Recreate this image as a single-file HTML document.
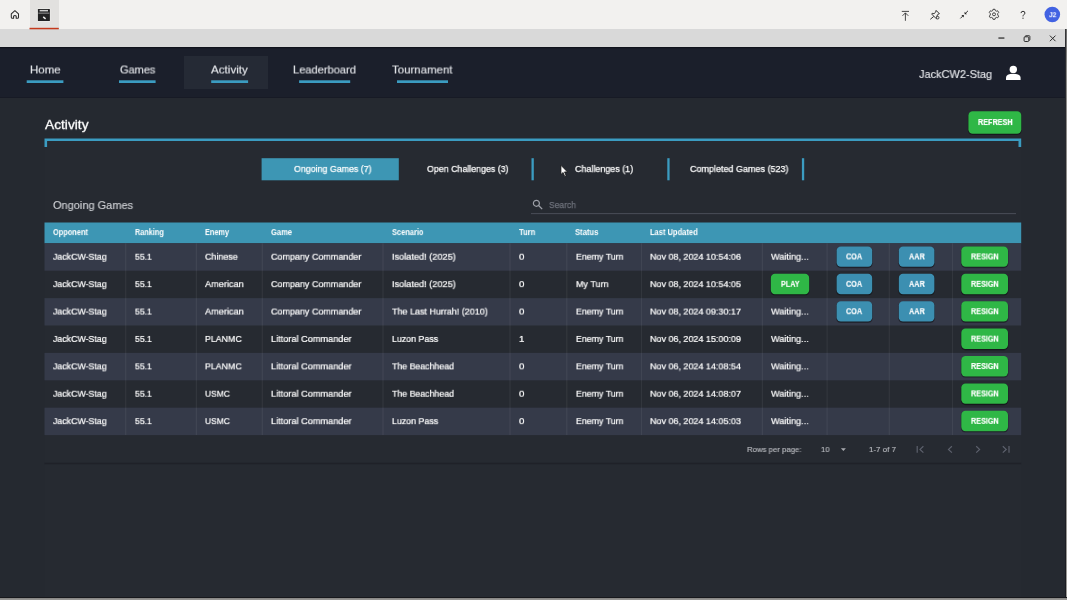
<!DOCTYPE html>
<html>
<head>
<meta charset="utf-8">
<title>Activity</title>
<style>
*{box-sizing:border-box;margin:0;padding:0}
html,body{width:1067px;height:600px;overflow:hidden;background:#9c9b98;font-family:"Liberation Sans",sans-serif;}
#topbar{position:absolute;left:0;top:0;width:1067px;height:29px;background:#f2f1ef}
#tabsel{position:absolute;left:29.5px;top:0;width:29.3px;height:29px;background:#e2e1df}
#titlebar{position:absolute;left:0;top:29px;width:1065px;height:18px;background:#d9d9d9}
#re1{position:absolute;left:1064.8px;top:29px;width:1.2px;height:571px;background:linear-gradient(#3a3a3a 0,#2a2b30 20px,#1b1c22 100%)}
#re2{position:absolute;left:1066px;top:29px;width:1px;height:571px;background:linear-gradient(#6a6a6a 0,#8d8c8a 40px,#9c9b98 100%)}
#nav{position:absolute;left:0;top:47px;width:1065px;height:51px;background:#1b1f2b}
#content{position:absolute;left:0;top:98px;width:1065px;height:499.5px;background:#252930}
#card{position:absolute;left:44.5px;top:141px;width:976.5px;height:456.5px;background:#262a31}
#bottomedge{position:absolute;left:0;top:597px;width:1067px;height:3px;background:linear-gradient(#17181c 0,#17181c 0.8px,#8a8987 1.4px,#9c9b98 3px)}
.t{position:absolute;white-space:nowrap;transform-origin:0 50%;will-change:transform}
.navitem{height:16px;line-height:16px;font-size:11.5px;color:#e2e4e8;-webkit-text-stroke:0.15px #e2e4e8}
#navact{position:absolute;left:184.3px;top:56px;width:83.3px;height:33px;background:#252a35}
#user{font-size:11.8px;height:16px;line-height:16px;color:#e2e4e8;-webkit-text-stroke:0.15px #e2e4e8}
.bt{color:#fff;font-weight:bold;font-size:8.8px;height:10px;line-height:10px;-webkit-text-stroke:0.15px #fff}
#h1{font-size:13.5px;height:18px;line-height:18px;color:#fff;-webkit-text-stroke:0.3px #fff}
.tab{height:22px;line-height:22px;font-size:9.6px;color:#fff;-webkit-text-stroke:0.25px #fff}
#sect{font-size:11.4px;height:16px;line-height:16px;color:#d2d4d8;-webkit-text-stroke:0.12px #d2d4d8}
#search{font-size:9.7px;height:14px;line-height:14px;color:#6d717b;-webkit-text-stroke:0.25px #6d717b}
.th{height:20.8px;line-height:20px;font-size:8.4px;font-weight:bold;color:#fff}
.td{height:14px;line-height:14px;font-size:9.7px;color:#fff;-webkit-text-stroke:0.22px #fff}
.pg{height:13px;line-height:13px;font-size:8px;color:#b8babf;-webkit-text-stroke:0.15px #b8babf}
svg{position:absolute;overflow:visible}
</style>
</head>
<body>
<div id="topbar"></div>
<div id="tabsel"></div>
<div id="titlebar"></div>
<div id="re1"></div><div id="re2"></div>
<div id="nav"></div>
<div id="content"></div>
<div id="card"></div>
<div id="bottomedge"></div>
<svg id="ul" style="left:0;top:0" width="1067" height="600" viewBox="0 0 1067 600">
<rect x="261.6" y="158.2" width="137.2" height="22.1" fill="#3d96b4"/>
<rect x="44.5" y="222.5" width="976.7" height="20.8" fill="#3d96b4"/>
<rect x="44.5" y="243.30" width="976.7" height="27.40" fill="#353a49"/>
<rect x="44.5" y="298.10" width="976.7" height="27.40" fill="#353a49"/>
<rect x="44.5" y="352.90" width="976.7" height="27.40" fill="#353a49"/>
<rect x="44.5" y="407.70" width="976.7" height="27.40" fill="#353a49"/>
<rect x="125.1" y="243.3" width="1.2" height="191.8" fill="#fff" fill-opacity="0.06"/>
<rect x="195.8" y="243.3" width="1.2" height="191.8" fill="#fff" fill-opacity="0.06"/>
<rect x="261.7" y="243.3" width="1.2" height="191.8" fill="#fff" fill-opacity="0.06"/>
<rect x="382.4" y="243.3" width="1.2" height="191.8" fill="#fff" fill-opacity="0.06"/>
<rect x="509.4" y="243.3" width="1.2" height="191.8" fill="#fff" fill-opacity="0.06"/>
<rect x="566.2" y="243.3" width="1.2" height="191.8" fill="#fff" fill-opacity="0.06"/>
<rect x="640.9" y="243.3" width="1.2" height="191.8" fill="#fff" fill-opacity="0.06"/>
<rect x="761.8" y="243.3" width="1.2" height="191.8" fill="#fff" fill-opacity="0.06"/>
<rect x="826.5" y="243.3" width="1.2" height="191.8" fill="#fff" fill-opacity="0.06"/>
<rect x="888.7" y="243.3" width="1.2" height="191.8" fill="#fff" fill-opacity="0.06"/>
<rect x="951.9" y="243.3" width="1.2" height="191.8" fill="#fff" fill-opacity="0.06"/>
<rect x="967.9" y="111.50" width="53.9" height="23.6" rx="4.6" fill="#000" fill-opacity="0.28"/>
<rect x="968.4" y="111.90" width="52.9" height="22.4" rx="4.2" fill="#000" fill-opacity="0.35"/>
<rect x="968.4" y="111.30" width="52.9" height="22.4" rx="4.2" fill="#2fb746"/>
<rect x="836.1" y="246.60" width="36.6" height="21.6" rx="4.6" fill="#000" fill-opacity="0.28"/>
<rect x="836.6" y="247.00" width="35.6" height="20.4" rx="4.2" fill="#000" fill-opacity="0.35"/>
<rect x="836.6" y="246.40" width="35.6" height="20.4" rx="4.2" fill="#3c8fb1"/>
<rect x="898.3" y="246.60" width="36.6" height="21.6" rx="4.6" fill="#000" fill-opacity="0.28"/>
<rect x="898.8" y="247.00" width="35.6" height="20.4" rx="4.2" fill="#000" fill-opacity="0.35"/>
<rect x="898.8" y="246.40" width="35.6" height="20.4" rx="4.2" fill="#3c8fb1"/>
<rect x="960.8" y="246.60" width="47.7" height="21.6" rx="4.6" fill="#000" fill-opacity="0.28"/>
<rect x="961.3" y="247.00" width="46.7" height="20.4" rx="4.2" fill="#000" fill-opacity="0.35"/>
<rect x="961.3" y="246.40" width="46.7" height="20.4" rx="4.2" fill="#2fb746"/>
<rect x="770.3" y="274.00" width="39.4" height="21.6" rx="4.6" fill="#000" fill-opacity="0.28"/>
<rect x="770.8" y="274.40" width="38.4" height="20.4" rx="4.2" fill="#000" fill-opacity="0.35"/>
<rect x="770.8" y="273.80" width="38.4" height="20.4" rx="4.2" fill="#2fb746"/>
<rect x="836.1" y="274.00" width="36.6" height="21.6" rx="4.6" fill="#000" fill-opacity="0.28"/>
<rect x="836.6" y="274.40" width="35.6" height="20.4" rx="4.2" fill="#000" fill-opacity="0.35"/>
<rect x="836.6" y="273.80" width="35.6" height="20.4" rx="4.2" fill="#3c8fb1"/>
<rect x="898.3" y="274.00" width="36.6" height="21.6" rx="4.6" fill="#000" fill-opacity="0.28"/>
<rect x="898.8" y="274.40" width="35.6" height="20.4" rx="4.2" fill="#000" fill-opacity="0.35"/>
<rect x="898.8" y="273.80" width="35.6" height="20.4" rx="4.2" fill="#3c8fb1"/>
<rect x="960.8" y="274.00" width="47.7" height="21.6" rx="4.6" fill="#000" fill-opacity="0.28"/>
<rect x="961.3" y="274.40" width="46.7" height="20.4" rx="4.2" fill="#000" fill-opacity="0.35"/>
<rect x="961.3" y="273.80" width="46.7" height="20.4" rx="4.2" fill="#2fb746"/>
<rect x="836.1" y="301.40" width="36.6" height="21.6" rx="4.6" fill="#000" fill-opacity="0.28"/>
<rect x="836.6" y="301.80" width="35.6" height="20.4" rx="4.2" fill="#000" fill-opacity="0.35"/>
<rect x="836.6" y="301.20" width="35.6" height="20.4" rx="4.2" fill="#3c8fb1"/>
<rect x="898.3" y="301.40" width="36.6" height="21.6" rx="4.6" fill="#000" fill-opacity="0.28"/>
<rect x="898.8" y="301.80" width="35.6" height="20.4" rx="4.2" fill="#000" fill-opacity="0.35"/>
<rect x="898.8" y="301.20" width="35.6" height="20.4" rx="4.2" fill="#3c8fb1"/>
<rect x="960.8" y="301.40" width="47.7" height="21.6" rx="4.6" fill="#000" fill-opacity="0.28"/>
<rect x="961.3" y="301.80" width="46.7" height="20.4" rx="4.2" fill="#000" fill-opacity="0.35"/>
<rect x="961.3" y="301.20" width="46.7" height="20.4" rx="4.2" fill="#2fb746"/>
<rect x="960.8" y="328.80" width="47.7" height="21.6" rx="4.6" fill="#000" fill-opacity="0.28"/>
<rect x="961.3" y="329.20" width="46.7" height="20.4" rx="4.2" fill="#000" fill-opacity="0.35"/>
<rect x="961.3" y="328.60" width="46.7" height="20.4" rx="4.2" fill="#2fb746"/>
<rect x="960.8" y="356.20" width="47.7" height="21.6" rx="4.6" fill="#000" fill-opacity="0.28"/>
<rect x="961.3" y="356.60" width="46.7" height="20.4" rx="4.2" fill="#000" fill-opacity="0.35"/>
<rect x="961.3" y="356.00" width="46.7" height="20.4" rx="4.2" fill="#2fb746"/>
<rect x="960.8" y="383.60" width="47.7" height="21.6" rx="4.6" fill="#000" fill-opacity="0.28"/>
<rect x="961.3" y="384.00" width="46.7" height="20.4" rx="4.2" fill="#000" fill-opacity="0.35"/>
<rect x="961.3" y="383.40" width="46.7" height="20.4" rx="4.2" fill="#2fb746"/>
<rect x="960.8" y="411.00" width="47.7" height="21.6" rx="4.6" fill="#000" fill-opacity="0.28"/>
<rect x="961.3" y="411.40" width="46.7" height="20.4" rx="4.2" fill="#000" fill-opacity="0.35"/>
<rect x="961.3" y="410.80" width="46.7" height="20.4" rx="4.2" fill="#2fb746"/>
</svg>

<!-- top bar icons -->
<!-- upload -->
<!-- pin -->
<!-- collapse -->
<!-- gear -->
<!-- help -->
<!-- avatar -->
<!-- window controls -->

<!-- nav -->
<div id="navact"></div>
<div class="t navitem" style="top:61px;transform:translateY(0.50px) rotate(0.05deg) scaleX(0.9971);left:29.8px">Home</div>
<div class="t navitem" style="top:61px;transform:translateY(0.50px) rotate(0.05deg) scaleX(0.9547);left:119.6px">Games</div>
<div class="t navitem" style="top:61px;transform:translateY(0.50px) rotate(0.05deg) scaleX(1.0131);left:211.2px">Activity</div>
<div class="t navitem" style="top:61px;transform:translateY(0.50px) rotate(0.05deg) scaleX(0.9657);left:293px">Leaderboard</div>
<div class="t navitem" style="top:61px;transform:translateY(0.50px) rotate(0.05deg) scaleX(0.9945);left:391.7px">Tournament</div>
<div class="t" id="user" style="top:66px;transform:translateY(0.00px) rotate(0.05deg) scaleX(0.9304);left:918.8px">JackCW2-Stag</div>

<!-- content head -->
<div class="t" id="h1" style="top:116px;transform:translateY(0.10px) rotate(0.05deg) scaleX(1.0172);left:44.5px">Activity</div>

<!-- tabs -->
<div class="t tab" style="top:157px;transform:translateY(0.90px) rotate(0.05deg) scaleX(0.9211);left:294.4px">Ongoing Games (7)</div>
<div class="t tab" style="top:157px;transform:translateY(0.90px) rotate(0.05deg) scaleX(0.9217);left:427.4px">Open Challenges (3)</div>
<div class="t tab" style="top:157px;transform:translateY(0.90px) rotate(0.05deg) scaleX(0.9326);left:574.8px">Challenges (1)</div>
<div class="t tab" style="top:157px;transform:translateY(0.90px) rotate(0.05deg) scaleX(0.9377);left:689.5px">Completed Games (523)</div>

<div class="t" id="sect" style="top:197px;transform:translateY(0.00px) rotate(0.05deg) scaleX(0.9656);left:53.2px">Ongoing Games</div>
<div class="t" id="search" style="top:198px;transform:translateY(0.00px) rotate(0.05deg) scaleX(0.8794);left:548.7px">Search</div>

<!-- table -->
<div class="t th" style="top:222px;transform:translateY(0.10px) rotate(0.05deg) scaleX(0.8825);left:53.0px">Opponent</div>
<div class="t th" style="top:222px;transform:translateY(0.10px) rotate(0.05deg) scaleX(0.8715);left:135.0px">Ranking</div>
<div class="t th" style="top:222px;transform:translateY(0.10px) rotate(0.05deg) scaleX(0.8774);left:204.9px">Enemy</div>
<div class="t th" style="top:222px;transform:translateY(0.10px) rotate(0.05deg) scaleX(0.9063);left:270.5px">Game</div>
<div class="t th" style="top:222px;transform:translateY(0.10px) rotate(0.05deg) scaleX(0.8901);left:391.7px">Scenario</div>
<div class="t th" style="top:222px;transform:translateY(0.10px) rotate(0.05deg) scaleX(0.9119);left:518.5px">Turn</div>
<div class="t th" style="top:222px;transform:translateY(0.10px) rotate(0.05deg) scaleX(0.9137);left:575.2px">Status</div>
<div class="t th" style="top:222px;transform:translateY(0.10px) rotate(0.05deg) scaleX(0.8989);left:650.1px">Last Updated</div>
<div class="t bt" style="top:117px;transform:translateY(0.05px) rotate(0.05deg) scaleX(0.7880);left:977.8px;font-size:9.2px">REFRESH</div>
<div class="t td" style="top:249px;transform:translateY(0.75px) rotate(0.05deg) scaleX(0.9078);left:53.1px;">JackCW-Stag</div>
<div class="t td" style="top:249px;transform:translateY(0.75px) rotate(0.05deg) scaleX(0.8908);left:135.1px;">55.1</div>
<div class="t td" style="top:249px;transform:translateY(0.75px) rotate(0.05deg) scaleX(0.9199);left:205.2px;">Chinese</div>
<div class="t td" style="top:249px;transform:translateY(0.75px) rotate(0.05deg) scaleX(0.9266);left:270.8px;">Company Commander</div>
<div class="t td" style="top:249px;transform:translateY(0.75px) rotate(0.05deg) scaleX(0.9476);left:392.0px;">Isolated! (2025)</div>
<div class="t td" style="top:249px;transform:translateY(0.75px) rotate(0.05deg) scaleX(1.0017);left:518.7px;">0</div>
<div class="t td" style="top:249px;transform:translateY(0.75px) rotate(0.05deg) scaleX(0.9094);left:575.5px;">Enemy Turn</div>
<div class="t td" style="top:249px;transform:translateY(0.75px) rotate(0.05deg) scaleX(0.9273);left:650.4px;">Nov 08, 2024 10:54:06</div>
<div class="t td" style="top:249px;transform:translateY(0.75px) rotate(0.05deg) scaleX(0.9443);left:771.4px;">Waiting...</div>
<div class="t bt" style="top:251px;transform:translateY(0.45px) rotate(0.05deg) scaleX(0.8230);left:846.2px;">COA</div>
<div class="t bt" style="top:251px;transform:translateY(0.45px) rotate(0.05deg) scaleX(0.8289);left:908.7px;">AAR</div>
<div class="t bt" style="top:251px;transform:translateY(0.45px) rotate(0.05deg) scaleX(0.8241);left:970.5px;">RESIGN</div>
<div class="t td" style="top:277px;transform:translateY(0.15px) rotate(0.05deg) scaleX(0.9078);left:53.1px;">JackCW-Stag</div>
<div class="t td" style="top:277px;transform:translateY(0.15px) rotate(0.05deg) scaleX(0.8908);left:135.1px;">55.1</div>
<div class="t td" style="top:277px;transform:translateY(0.15px) rotate(0.05deg) scaleX(0.9457);left:205.2px;">American</div>
<div class="t td" style="top:277px;transform:translateY(0.15px) rotate(0.05deg) scaleX(0.9266);left:270.8px;">Company Commander</div>
<div class="t td" style="top:277px;transform:translateY(0.15px) rotate(0.05deg) scaleX(0.9476);left:392.0px;">Isolated! (2025)</div>
<div class="t td" style="top:277px;transform:translateY(0.15px) rotate(0.05deg) scaleX(1.0017);left:518.7px;">0</div>
<div class="t td" style="top:277px;transform:translateY(0.15px) rotate(0.05deg) scaleX(0.9314);left:575.5px;">My Turn</div>
<div class="t td" style="top:277px;transform:translateY(0.15px) rotate(0.05deg) scaleX(0.9273);left:650.4px;">Nov 08, 2024 10:54:05</div>
<div class="t bt" style="top:278px;transform:translateY(0.85px) rotate(0.05deg) scaleX(0.8210);left:781.1px;">PLAY</div>
<div class="t bt" style="top:278px;transform:translateY(0.85px) rotate(0.05deg) scaleX(0.8230);left:846.2px;">COA</div>
<div class="t bt" style="top:278px;transform:translateY(0.85px) rotate(0.05deg) scaleX(0.8289);left:908.7px;">AAR</div>
<div class="t bt" style="top:278px;transform:translateY(0.85px) rotate(0.05deg) scaleX(0.8241);left:970.5px;">RESIGN</div>
<div class="t td" style="top:304px;transform:translateY(0.55px) rotate(0.05deg) scaleX(0.9078);left:53.1px;">JackCW-Stag</div>
<div class="t td" style="top:304px;transform:translateY(0.55px) rotate(0.05deg) scaleX(0.8908);left:135.1px;">55.1</div>
<div class="t td" style="top:304px;transform:translateY(0.55px) rotate(0.05deg) scaleX(0.9457);left:205.2px;">American</div>
<div class="t td" style="top:304px;transform:translateY(0.55px) rotate(0.05deg) scaleX(0.9266);left:270.8px;">Company Commander</div>
<div class="t td" style="top:304px;transform:translateY(0.55px) rotate(0.05deg) scaleX(0.9256);left:392.0px;">The Last Hurrah! (2010)</div>
<div class="t td" style="top:304px;transform:translateY(0.55px) rotate(0.05deg) scaleX(1.0017);left:518.7px;">0</div>
<div class="t td" style="top:304px;transform:translateY(0.55px) rotate(0.05deg) scaleX(0.9094);left:575.5px;">Enemy Turn</div>
<div class="t td" style="top:304px;transform:translateY(0.55px) rotate(0.05deg) scaleX(0.9273);left:650.4px;">Nov 08, 2024 09:30:17</div>
<div class="t td" style="top:304px;transform:translateY(0.55px) rotate(0.05deg) scaleX(0.9443);left:771.4px;">Waiting...</div>
<div class="t bt" style="top:306px;transform:translateY(0.25px) rotate(0.05deg) scaleX(0.8230);left:846.2px;">COA</div>
<div class="t bt" style="top:306px;transform:translateY(0.25px) rotate(0.05deg) scaleX(0.8289);left:908.7px;">AAR</div>
<div class="t bt" style="top:306px;transform:translateY(0.25px) rotate(0.05deg) scaleX(0.8241);left:970.5px;">RESIGN</div>
<div class="t td" style="top:331px;transform:translateY(0.95px) rotate(0.05deg) scaleX(0.9078);left:53.1px;">JackCW-Stag</div>
<div class="t td" style="top:331px;transform:translateY(0.95px) rotate(0.05deg) scaleX(0.8908);left:135.1px;">55.1</div>
<div class="t td" style="top:331px;transform:translateY(0.95px) rotate(0.05deg) scaleX(0.9090);left:205.2px;">PLANMC</div>
<div class="t td" style="top:331px;transform:translateY(0.95px) rotate(0.05deg) scaleX(0.9474);left:270.8px;">Littoral Commander</div>
<div class="t td" style="top:331px;transform:translateY(0.95px) rotate(0.05deg) scaleX(0.9126);left:392.0px;">Luzon Pass</div>
<div class="t td" style="top:331px;transform:translateY(0.95px) rotate(0.05deg) scaleX(1.0017);left:518.7px;">1</div>
<div class="t td" style="top:331px;transform:translateY(0.95px) rotate(0.05deg) scaleX(0.9094);left:575.5px;">Enemy Turn</div>
<div class="t td" style="top:331px;transform:translateY(0.95px) rotate(0.05deg) scaleX(0.9273);left:650.4px;">Nov 06, 2024 15:00:09</div>
<div class="t td" style="top:331px;transform:translateY(0.95px) rotate(0.05deg) scaleX(0.9443);left:771.4px;">Waiting...</div>
<div class="t bt" style="top:333px;transform:translateY(0.65px) rotate(0.05deg) scaleX(0.8241);left:970.5px;">RESIGN</div>
<div class="t td" style="top:359px;transform:translateY(0.35px) rotate(0.05deg) scaleX(0.9078);left:53.1px;">JackCW-Stag</div>
<div class="t td" style="top:359px;transform:translateY(0.35px) rotate(0.05deg) scaleX(0.8908);left:135.1px;">55.1</div>
<div class="t td" style="top:359px;transform:translateY(0.35px) rotate(0.05deg) scaleX(0.9090);left:205.2px;">PLANMC</div>
<div class="t td" style="top:359px;transform:translateY(0.35px) rotate(0.05deg) scaleX(0.9474);left:270.8px;">Littoral Commander</div>
<div class="t td" style="top:359px;transform:translateY(0.35px) rotate(0.05deg) scaleX(0.9063);left:392.0px;">The Beachhead</div>
<div class="t td" style="top:359px;transform:translateY(0.35px) rotate(0.05deg) scaleX(1.0017);left:518.7px;">0</div>
<div class="t td" style="top:359px;transform:translateY(0.35px) rotate(0.05deg) scaleX(0.9094);left:575.5px;">Enemy Turn</div>
<div class="t td" style="top:359px;transform:translateY(0.35px) rotate(0.05deg) scaleX(0.9273);left:650.4px;">Nov 06, 2024 14:08:54</div>
<div class="t td" style="top:359px;transform:translateY(0.35px) rotate(0.05deg) scaleX(0.9443);left:771.4px;">Waiting...</div>
<div class="t bt" style="top:361px;transform:translateY(0.05px) rotate(0.05deg) scaleX(0.8241);left:970.5px;">RESIGN</div>
<div class="t td" style="top:386px;transform:translateY(0.75px) rotate(0.05deg) scaleX(0.9078);left:53.1px;">JackCW-Stag</div>
<div class="t td" style="top:386px;transform:translateY(0.75px) rotate(0.05deg) scaleX(0.8908);left:135.1px;">55.1</div>
<div class="t td" style="top:386px;transform:translateY(0.75px) rotate(0.05deg) scaleX(0.8727);left:205.2px;">USMC</div>
<div class="t td" style="top:386px;transform:translateY(0.75px) rotate(0.05deg) scaleX(0.9474);left:270.8px;">Littoral Commander</div>
<div class="t td" style="top:386px;transform:translateY(0.75px) rotate(0.05deg) scaleX(0.9063);left:392.0px;">The Beachhead</div>
<div class="t td" style="top:386px;transform:translateY(0.75px) rotate(0.05deg) scaleX(1.0017);left:518.7px;">0</div>
<div class="t td" style="top:386px;transform:translateY(0.75px) rotate(0.05deg) scaleX(0.9094);left:575.5px;">Enemy Turn</div>
<div class="t td" style="top:386px;transform:translateY(0.75px) rotate(0.05deg) scaleX(0.9273);left:650.4px;">Nov 06, 2024 14:08:07</div>
<div class="t td" style="top:386px;transform:translateY(0.75px) rotate(0.05deg) scaleX(0.9443);left:771.4px;">Waiting...</div>
<div class="t bt" style="top:388px;transform:translateY(0.45px) rotate(0.05deg) scaleX(0.8241);left:970.5px;">RESIGN</div>
<div class="t td" style="top:414px;transform:translateY(0.15px) rotate(0.05deg) scaleX(0.9078);left:53.1px;">JackCW-Stag</div>
<div class="t td" style="top:414px;transform:translateY(0.15px) rotate(0.05deg) scaleX(0.8908);left:135.1px;">55.1</div>
<div class="t td" style="top:414px;transform:translateY(0.15px) rotate(0.05deg) scaleX(0.8727);left:205.2px;">USMC</div>
<div class="t td" style="top:414px;transform:translateY(0.15px) rotate(0.05deg) scaleX(0.9474);left:270.8px;">Littoral Commander</div>
<div class="t td" style="top:414px;transform:translateY(0.15px) rotate(0.05deg) scaleX(0.9126);left:392.0px;">Luzon Pass</div>
<div class="t td" style="top:414px;transform:translateY(0.15px) rotate(0.05deg) scaleX(1.0017);left:518.7px;">0</div>
<div class="t td" style="top:414px;transform:translateY(0.15px) rotate(0.05deg) scaleX(0.9094);left:575.5px;">Enemy Turn</div>
<div class="t td" style="top:414px;transform:translateY(0.15px) rotate(0.05deg) scaleX(0.9273);left:650.4px;">Nov 06, 2024 14:05:03</div>
<div class="t td" style="top:414px;transform:translateY(0.15px) rotate(0.05deg) scaleX(0.9443);left:771.4px;">Waiting...</div>
<div class="t bt" style="top:415px;transform:translateY(0.85px) rotate(0.05deg) scaleX(0.8241);left:970.5px;">RESIGN</div>
<svg id="ov" style="left:0;top:0" width="1067" height="600" viewBox="0 0 1067 600">
<g fill="#3b9cc1">
<rect x="26.7" y="80.3" width="36.7" height="2.7"/>
<rect x="119" y="80.3" width="36.6" height="2.7"/>
<rect x="211.2" y="80.3" width="36.9" height="2.7"/>
<rect x="299.1" y="80.3" width="51.1" height="2.7"/>
<rect x="397" y="80.3" width="51" height="2.7"/>
<path d="M44.5 147 V138.4 H1021.2 V147 H1018.5 V141 H47.1 V147 Z"/>
<rect x="531.5" y="158.2" width="2.3" height="22.1"/>
<rect x="667.3" y="158.2" width="2.3" height="22.1"/>
<rect x="801.9" y="158.2" width="2.3" height="22.1"/>
</g>
<rect x="531" y="213.2" width="485" height="0.9" fill="#4e525d"/>
<rect x="0" y="47" width="1065" height="1.2" fill="#10131c"/>
<rect x="29.5" y="27.8" width="29.3" height="1.5" fill="#c4391c"/>
<rect x="0" y="97" width="1065" height="1" fill="#171a25"/>
<rect x="44.5" y="462.7" width="976.7" height="1.6" fill="#1f2128"/>
<g transform="translate(10.4,10) scale(1.0000,1.0000)"><path d="M4.5 0.7 L0.9 3.9 V7.2 Q0.9 8.3 2 8.3 H3.2 V6.2 Q4.5 4.6 5.8 6.2 V8.3 H7 Q8.1 8.3 8.1 7.2 V3.9 Z" fill="none" stroke="#2b2b2b" stroke-width="1.05" stroke-linejoin="round"/></g>
<g transform="translate(37.2,8.3) scale(1.0000,1.0000)"><rect x="0" y="0" width="13.4" height="13.4" rx="1" fill="#ecebe9"/><rect x="0.7" y="0.7" width="12" height="12" rx="0.5" fill="#212122"/><rect x="2.4" y="1.6" width="8.4" height="1.5" fill="#cfcfcf"/><rect x="1.2" y="4.3" width="11" height="1.1" fill="#8c8c8c"/><path d="M6 8.6 L8.4 10.6" stroke="#efefef" stroke-width="1.4"/></g>
<g transform="translate(901.4,10.5) scale(1.0000,1.0000)"><path d="M0.4 0.9 H7.6 M4 10.3 V2.4 M1.1 5.3 L4 2.4 L6.9 5.3" fill="none" stroke="#2a2a2a" stroke-width="0.85"/></g>
<g transform="translate(929.8,9.8) scale(1.0000,1.0000)"><path d="M6.3 0.6 L9.6 3.9 L8.2 4.4 L6.9 6.6 L7.3 8.4 L6.6 9 L1.8 4.2 L2.4 3.5 L4.2 3.9 L6 2.2 Z M3.9 6.7 L0.5 9.5" fill="none" stroke="#222" stroke-width="0.9" stroke-linejoin="round"/><circle cx="7.9" cy="7.9" r="1.3" fill="#f2f1ef" stroke="#222" stroke-width="0.8"/></g>
<g transform="translate(960,10.4) scale(1.0000,1.0000)"><path d="M8 0.4 L5.2 3.2 M0.4 8 L3.2 5.2" stroke="#222" stroke-width="0.9" fill="none"/><path d="M4.6 1.4 V3.8 H7 Z M1.4 4.6 H3.8 V7 Z" fill="#222"/></g>
<g transform="translate(988.5,8.8) scale(1.0000,1.0000)"><path d="M4.5 0.5 H6.5 L6.9 1.9 L7.8 2.4 L9.2 2 L10.2 3.7 L9.2 4.8 V6.2 L10.2 7.3 L9.2 9 L7.8 8.6 L6.9 9.1 L6.5 10.5 H4.5 L4.1 9.1 L3.2 8.6 L1.8 9 L0.8 7.3 L1.8 6.2 V4.8 L0.8 3.7 L1.8 2 L3.2 2.4 L4.1 1.9 Z" fill="none" stroke="#333" stroke-width="0.9" stroke-linejoin="round"/><circle cx="5.5" cy="5.5" r="1.5" fill="none" stroke="#333" stroke-width="0.9"/></g>
<g transform="translate(1020.2,10.8) scale(1.0000,1.0000)"><path d="M0.8 2.3 Q0.9 0.5 2.8 0.5 Q4.7 0.5 4.7 2.2 Q4.7 3.2 3.7 3.9 Q2.8 4.5 2.8 5.6" fill="none" stroke="#222" stroke-width="0.95"/><circle cx="2.8" cy="7.4" r="0.6" fill="#222"/></g>
<g transform="translate(1044.5,6.7) scale(1.0000,1.0000)"><circle cx="7.8" cy="7.8" r="7.8" fill="#4262e2"/></g>
<g transform="translate(998.4,37.4) scale(1.0000,1.0000)"><rect width="6" height="1.3" fill="#333"/></g>
<g transform="translate(1023.6,35.2) scale(1.0000,1.0000)"><path d="M1.6 1.6 V1.3 Q1.6 0.5 2.4 0.5 H5.5 Q6.3 0.5 6.3 1.3 V4.4 Q6.3 5.2 5.5 5.2 H5.2" fill="none" stroke="#2a2a2a" stroke-width="0.9"/><rect x="0.5" y="1.6" width="4.7" height="4.7" rx="1" fill="none" stroke="#2a2a2a" stroke-width="1"/></g>
<g transform="translate(1049.6,35.3) scale(1.0000,1.0000)"><path d="M0.3 0.3 L5.9 5.9 M5.9 0.3 L0.3 5.9" stroke="#222" stroke-width="0.95"/></g>
<g transform="translate(1006,65.6) scale(1.0000,1.0000)"><circle cx="7.3" cy="3.8" r="3.7" fill="#fff"/><path d="M0 14.4 V12.2 Q0 8.2 7.3 8.2 Q14.6 8.2 14.6 12.2 V14.4 Z" fill="#fff"/></g>
<g transform="translate(560.4,164.8) scale(1.0857,1.0783)"><path d="M0.5 0.5 V9 L2.5 7.1 L4 10.8 L5.3 10.2 L3.8 6.6 H6.5 Z" fill="#fff" stroke="#111" stroke-width="0.7"/></g>
<g transform="translate(532.4,199.3) scale(1.0000,1.0000)"><circle cx="4" cy="4" r="3" fill="none" stroke="#9da0a8" stroke-width="1.2"/><path d="M6.2 6.2 L9.8 9.8" stroke="#9da0a8" stroke-width="1.3"/></g>
<g transform="translate(840.9,448.2) scale(0.8929,0.8750)"><path d="M0 0 H5.6 L2.8 3.2 Z" fill="#a9abb0"/></g>
<g transform="translate(916.4,445.4) scale(1.0000,1.0000)"><path d="M0.8 0.6 V7.4 M7 0.8 L3.6 4 L7 7.2" fill="none" stroke="#5d616d" stroke-width="1.2"/></g>
<g transform="translate(946.5,445.4) scale(1.0000,1.0000)"><path d="M5.4 0.8 L2 4 L5.4 7.2" fill="none" stroke="#5d616d" stroke-width="1.2"/></g>
<g transform="translate(973.6,445.4) scale(1.0000,1.0000)"><path d="M2.6 0.8 L6 4 L2.6 7.2" fill="none" stroke="#5d616d" stroke-width="1.2"/></g>
<g transform="translate(1001.8,445.4) scale(1.0000,1.0000)"><path d="M7.2 0.6 V7.4 M1 0.8 L4.4 4 L1 7.2" fill="none" stroke="#5d616d" stroke-width="1.2"/></g>
</svg>
<div class="t" id="av" style="top:11px;transform:translateY(0.20px) rotate(0.05deg) scaleX(0.9646);left:1048.5px;font-size:6.9px;font-weight:bold;color:#fff;height:7px;line-height:7px">J2</div>

<div class="t pg" style="top:443px;transform:translateY(0.00px) rotate(0.05deg) scaleX(0.9727);left:746.8px">Rows per page:</div>
<div class="t pg" style="top:443px;transform:translateY(0.00px) rotate(0.05deg) scaleX(0.9544);left:820.5px">10</div>
<div class="t pg" style="top:443px;transform:translateY(0.00px) rotate(0.05deg) scaleX(0.9948);left:869px">1-7 of 7</div>
</body>
</html>
